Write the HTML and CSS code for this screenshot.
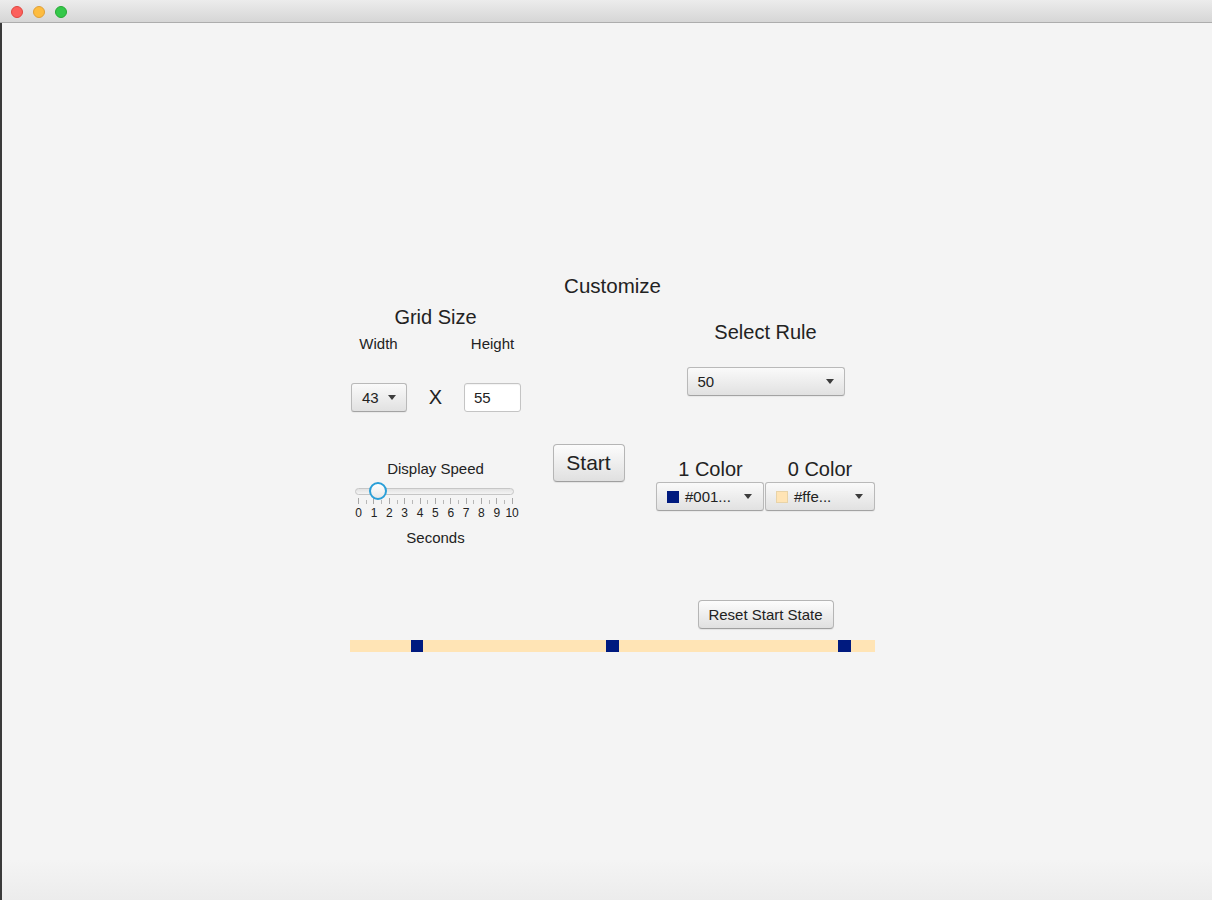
FILE: index.html
```html
<!DOCTYPE html>
<html>
<head>
<meta charset="utf-8">
<title>Customize</title>
<link rel="stylesheet" href="styles.css">
</head>
<body>
<div class="window">
  <div class="titlebar">
    <span class="light red"></span>
    <span class="light yellow"></span>
    <span class="light green"></span>
  </div>
  <div class="content">
    <div class="panel">
      <div class="heading">Customize</div>

      <div class="row">
        <div class="col col-left">
          <div class="h2 grid-title">Grid Size</div>
          <div class="size-labels"><span>Width</span><span></span><span>Height</span></div>
          <div class="size-controls">
            <div class="combo combo-small"><span>43</span><span class="arrow"></span></div>
            <span class="times">X</span>
            <div class="textfield">55</div>
          </div>
        </div>
        <div class="col col-mid"></div>
        <div class="col col-right">
          <div class="h2 rule-title">Select Rule</div>
          <div class="combo combo-rule"><span>50</span><span class="arrow"></span></div>
        </div>
      </div>

      <div class="row">
        <div class="col col-left">
          <div class="speed-label">Display Speed</div>
          <div class="slider">
            <div class="track-area">
              <div class="track"><div class="thumb"></div></div>
            </div>
            <svg class="ticks" width="171" height="6" viewBox="0 0 171 6">
              <path d="M8.5 0V6M23.5 0V6M39.5 0V6M54.5 0V6M70.5 0V6M85.5 0V6M100.5 0V6M116.5 0V6M131.5 0V6M146.5 0V6M162.5 0V6" stroke="#a8a8a8" stroke-width="1"/>
              <path d="M16.5 2V6M31.5 2V6M47.5 2V6M62.5 2V6M77.5 2V6M93.5 2V6M108.5 2V6M123.5 2V6M139.5 2V6M154.5 2V6" stroke="#b8b8b8" stroke-width="1"/>
            </svg>
            <div class="tick-labels">
              <span>0</span><span>1</span><span>2</span><span>3</span><span>4</span><span>5</span><span>6</span><span>7</span><span>8</span><span>9</span><span>10</span>
            </div>
          </div>
          <div class="seconds">Seconds</div>
        </div>
        <div class="col col-mid">
          <button class="btn start">Start</button>
        </div>
        <div class="col col-right">
          <div class="color-labels"><span>1 Color</span><span>0 Color</span></div>
          <div class="pickers">
            <div class="combo picker picker-one"><span class="swatch swatch-navy"></span><span class="picker-text">#001...</span><span class="arrow"></span></div>
            <div class="combo picker picker-zero"><span class="swatch swatch-cream"></span><span class="picker-text">#ffe...</span><span class="arrow"></span></div>
          </div>
        </div>
      </div>

      <div class="row">
        <div class="col col-left"></div>
        <div class="col col-mid"></div>
        <div class="col col-right">
          <button class="btn reset">Reset Start State</button>
        </div>
      </div>

      <div class="strip">
        <span></span><span></span><span></span><span></span><span></span><span class="on"></span><span></span><span></span><span></span><span></span>
        <span></span><span></span><span></span><span></span><span></span><span></span><span></span><span></span><span></span><span></span>
        <span></span><span class="on"></span><span></span><span></span><span></span><span></span><span></span><span></span><span></span><span></span>
        <span></span><span></span><span></span><span></span><span></span><span></span><span></span><span></span><span></span><span></span>
        <span class="on"></span><span></span><span></span>
      </div>
    </div>
  </div>
</div>
</body>
</html>
```

FILE: styles.css
```css
html, body {
  margin: 0;
  padding: 0;
}

body {
  font-family: "Liberation Sans", Arial, sans-serif;
  color: #222;
  background: #f4f4f4;
}

.window {
  height: 900px;
  display: flex;
  flex-direction: column;
  overflow: hidden;
}

.titlebar {
  height: 22px;
  border-bottom: 1px solid #adadad;
  background: linear-gradient(#ececec, #d6d6d6);
  display: flex;
  align-items: center;
  gap: 10px;
  padding-left: 11px;
}

.light {
  width: 12px;
  height: 12px;
  margin-top: 1px;
  border-radius: 50%;
  box-sizing: border-box;
}

.red { background: #fc605c; border: 1px solid #e0463f; }
.yellow { background: #fdbc40; border: 1px solid #dfa038; }
.green { background: #34c84a; border: 1px solid #26a934; }

.content {
  flex: 1;
  border-left: 2px solid #3a3a3a;
  background: linear-gradient(to bottom, #f4f4f4 calc(100% - 40px), #ececec);
  padding-top: 251px;
}

.panel {
  width: 525px;
  margin-left: 348px;
}

.heading {
  font-size: 20.5px;
  line-height: 24px;
  text-align: center;
}

.row {
  display: flex;
}

.col-left { width: 171px; }

.col-mid {
  width: 135px;
  display: flex;
  flex-direction: column;
  align-items: center;
}

.col-right {
  width: 219px;
  display: flex;
  flex-direction: column;
  align-items: center;
}

.h2 {
  font-size: 20px;
  line-height: 24px;
  text-align: center;
}

.grid-title { margin-top: 7px; }

.size-labels {
  margin-top: 6px;
  display: grid;
  grid-template-columns: repeat(3, 57px);
  font-size: 15px;
  line-height: 18px;
  text-align: center;
}

.size-controls {
  margin-top: 30px;
  display: grid;
  grid-template-columns: repeat(3, 57px);
  height: 29px;
  align-items: center;
}

.combo {
  box-sizing: border-box;
  height: 29px;
  display: flex;
  align-items: center;
  justify-content: space-between;
  padding: 0 10px;
  font-size: 15px;
  border: 1px solid #b9b9b9;
  border-bottom-color: #a3a3a3;
  border-radius: 3px;
  background: linear-gradient(#fafafa, #e1e1e1);
  box-shadow: 0 1px 1px rgba(0, 0, 0, 0.05);
}

.combo-small {
  width: 56px;
  margin-left: 1px;
}

.times {
  text-align: center;
  font-size: 20px;
  line-height: 29px;
}

.textfield {
  box-sizing: border-box;
  height: 29px;
  width: 57px;
  border: 1px solid #c4c4c4;
  border-radius: 3px;
  background: #fff;
  font-size: 15px;
  padding-left: 9px;
  line-height: 27px;
  box-shadow: inset 0 1px 1px rgba(0, 0, 0, 0.05);
}

.rule-title { margin-top: 22px; }

.combo-rule {
  width: 158px;
  margin-top: 23px;
}

.arrow {
  width: 0;
  height: 0;
  border-left: 4px solid transparent;
  border-right: 4px solid transparent;
  border-top: 5px solid #3c3c3c;
}

.speed-label {
  margin-top: 48px;
  font-size: 15px;
  line-height: 18px;
  text-align: center;
}

.track-area {
  height: 10px;
  padding-top: 10px;
}

.track {
  position: relative;
  margin-left: 5px;
  width: 159px;
  height: 7px;
  box-sizing: border-box;
  border-radius: 4px;
  border: 1px solid #c6c6c6;
  background: linear-gradient(#e2e2e2, #f4f4f4);
}

.thumb {
  position: absolute;
  left: 13px;
  top: -7px;
  width: 18px;
  height: 18px;
  box-sizing: border-box;
  border-radius: 50%;
  border: 2px solid #2a9fd8;
  background: linear-gradient(#ffffff, #e8e8e8);
}

.ticks { display: block; }

.tick-labels {
  margin-top: 2px;
  margin-left: 1px;
  display: grid;
  grid-template-columns: repeat(11, 15.35px);
  font-size: 12px;
  line-height: 14px;
  text-align: center;
  white-space: nowrap;
}

.seconds {
  margin-top: 9px;
  font-size: 15px;
  line-height: 18px;
  text-align: center;
}

.btn {
  box-sizing: border-box;
  padding: 0;
  font-family: inherit;
  color: #222;
  border: 1px solid #b5b5b5;
  border-bottom-color: #9f9f9f;
  border-radius: 4px;
  background: linear-gradient(#fcfcfc, #e0e0e0);
  box-shadow: 0 1px 1px rgba(0, 0, 0, 0.07);
  display: flex;
  align-items: center;
  justify-content: center;
}

.start {
  margin-top: 32px;
  width: 72px;
  height: 38px;
  font-size: 21px;
}

.color-labels {
  margin-top: 45px;
  display: grid;
  grid-template-columns: 109px 110px;
  font-size: 20px;
  line-height: 24px;
  text-align: center;
}

.pickers {
  margin-top: 1px;
  display: flex;
  gap: 1px;
}

.picker {
  justify-content: flex-start;
  padding: 0 11px 0 10px;
}

.picker-one { width: 108px; }
.picker-zero { width: 110px; }

.swatch {
  width: 12px;
  height: 12px;
  box-sizing: border-box;
  margin-right: 6px;
}

.swatch-navy { background: #001a7f; }
.swatch-cream { background: #ffe4b5; border: 1px solid #e8d3a8; }

.picker-text { flex: 1; }

.reset {
  margin-top: 53px;
  width: 136px;
  height: 29px;
  font-size: 15px;
}

.strip {
  margin-top: 11px;
  height: 12px;
  display: grid;
  grid-template-columns: repeat(43, 1fr);
  background: #ffe4b5;
}

.strip .on { background: #001a7f; }
```
